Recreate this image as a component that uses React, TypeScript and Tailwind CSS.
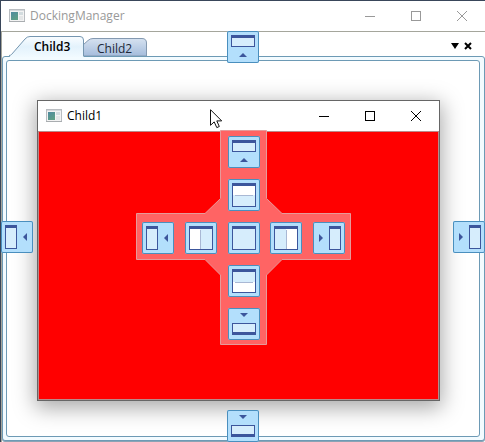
import type { ReactNode } from "react";

type Side = "top" | "bottom" | "left" | "right";
type GlyphKind = Side | "splitTop" | "splitBottom" | "splitLeft" | "splitRight" | "fill";

const NAVY = "#3c569c";
const PANE = "#d6edfc";

function Glyph({ kind }: { kind: GlyphKind }) {
  const pane = (x: number, y: number, w: number, h: number, barAtBottom = false) => (
    <>
      <rect x={x + 0.5} y={y + 0.5} width={w - 1} height={h - 1} fill={PANE} stroke={NAVY} />
      <rect x={x} y={barAtBottom ? y + h - 3 : y} width={w} height={3} fill={NAVY} />
    </>
  );
  return (
    <svg width="32" height="32" viewBox="0 0 32 32" className="block" aria-hidden="true">
      {kind === "top" && (
        <>
          {pane(4, 4, 24, 12)}
          <path d="M12 26 L16 22 L20 26 Z" fill={NAVY} />
        </>
      )}
      {kind === "bottom" && (
        <>
          {pane(4, 15, 24, 12, true)}
          <path d="M12 5 L20 5 L16 9 Z" fill={NAVY} />
        </>
      )}
      {kind === "left" && (
        <>
          {pane(4, 4, 12, 24)}
          <path d="M26 12 L26 20 L22 16 Z" fill={NAVY} />
        </>
      )}
      {kind === "right" && (
        <>
          {pane(16, 4, 12, 24)}
          <path d="M6 12 L6 20 L10 16 Z" fill={NAVY} />
        </>
      )}
      {!["top", "bottom", "left", "right"].includes(kind) && pane(4, 4, 24, 24)}
      {kind === "splitTop" && (
        <>
          <rect x="5" y="7" width="22" height="9" fill="#fff" />
          <path d="M7 16.5 H25" stroke="#a9b8d4" />
        </>
      )}
      {kind === "splitBottom" && (
        <>
          <rect x="5" y="17" width="22" height="10" fill="#fff" />
          <path d="M7 17.5 H25" stroke="#a9b8d4" />
        </>
      )}
      {kind === "splitLeft" && (
        <>
          <rect x="5" y="7" width="10" height="20" fill="#fff" />
          <path d="M15.5 8 V27" stroke="#a9b8d4" />
        </>
      )}
      {kind === "splitRight" && (
        <>
          <rect x="16" y="7" width="11" height="20" fill="#fff" />
          <path d="M16.5 8 V27" stroke="#a9b8d4" />
        </>
      )}
    </svg>
  );
}

function DockButton({ kind, label, className = "" }: { kind: GlyphKind; label: string; className?: string }) {
  return (
    <button
      type="button"
      aria-label={label}
      className={`flex size-8 items-center justify-center rounded-[2px] bg-[#b3dffc] shadow-[inset_0_0_0_1px_#4a8fbe] ${className}`}
    >
      <Glyph kind={kind} />
    </button>
  );
}

function AppIcon() {
  return (
    <svg width="16" height="14" viewBox="0 0 16 14" aria-hidden="true">
      <defs>
        <linearGradient id="appIconFill" x1="0" y1="0" x2="0.6" y2="1">
          <stop offset="0" stopColor="#4f8ba0" />
          <stop offset="1" stopColor="#5f9f86" />
        </linearGradient>
      </defs>
      <rect x="0.5" y="0.5" width="15" height="12" fill="#f3f3f3" stroke="#b9bdc1" />
      <rect x="1" y="1" width="14" height="1" fill="#d5d9dc" />
      <rect x="2" y="3" width="7" height="8" fill="url(#appIconFill)" />
      <rect x="10" y="3" width="4" height="3" fill="#d3dcdf" />
      <rect x="10" y="7" width="4" height="4" fill="#e4e6e7" />
      <rect x="0" y="12" width="16" height="1" fill="#a9adb0" />
    </svg>
  );
}

function CaptionButton({ label, children }: { label: string; children: ReactNode }) {
  return (
    <button type="button" aria-label={label} className="flex h-full w-[46px] items-center justify-center">
      <svg width="12" height="12" viewBox="0 0 12 12" fill="none" stroke="currentColor" aria-hidden="true">
        {children}
      </svg>
    </button>
  );
}

function TitleBar({ title, className }: { title: string; className: string }) {
  return (
    <header className={`flex h-[30px] shrink-0 items-center bg-white pl-2 ${className}`}>
      <AppIcon />
      <h1 className="ml-[5px] flex-1 text-[12px] leading-4">{title}</h1>
      <div className="flex h-full">
        <CaptionButton label="Minimize">
          <path d="M1 6.5 H11" />
        </CaptionButton>
        <CaptionButton label="Maximize">
          <rect x="1.5" y="1.5" width="9" height="9" />
        </CaptionButton>
        <CaptionButton label="Close">
          <path d="M1 1 L11 11 M11 1 L1 11" />
        </CaptionButton>
      </div>
    </header>
  );
}

function TabStrip() {
  return (
    <div className="flex h-6 items-end justify-between pl-[7px] pr-[13px]">
      <div role="tablist" className="flex items-end">
        <button
          type="button"
          role="tab"
          aria-selected="true"
          className="relative z-10 h-5 w-[75px] pt-0.5 pl-[25px] text-left text-[12px] leading-[18px] font-semibold text-black"
        >
          <svg width="75" height="21" viewBox="0 0 75 21" className="absolute top-0 left-0" aria-hidden="true">
            <defs>
              <linearGradient id="activeTab" x1="0" y1="0" x2="0" y2="1">
                <stop offset="0" stopColor="#fafdff" />
                <stop offset="0.5" stopColor="#e3f2fc" />
                <stop offset="1" stopColor="#f1faff" />
              </linearGradient>
            </defs>
            <path d="M0.5 21 L2 19 L16 3 Q18 0.5 21 0.5 H71 Q74.5 0.5 74.5 4 V21 Z" fill="url(#activeTab)" />
            <path
              d="M0 19.5 Q1.500 19.500 2.500 18.500 L16 3 Q18 0.5 21 0.5 H71 Q74.5 0.5 74.5 4 V20"
              fill="none"
              stroke="#7596b0"
            />
          </svg>
          <span className="relative">Child3</span>
        </button>
        <button
          type="button"
          role="tab"
          aria-selected="false"
          className="relative h-[18px] w-[63px] pt-0.5 pl-[13px] text-left text-[12px] leading-[18px] text-[#202838]"
        >
          <svg width="63" height="18" viewBox="0 0 63 18" className="absolute top-0 left-0" aria-hidden="true">
            <defs>
              <linearGradient id="idleTab" x1="0" y1="0" x2="0" y2="1">
                <stop offset="0" stopColor="#d6e2f0" />
                <stop offset="1" stopColor="#a4bcdc" />
              </linearGradient>
            </defs>
            <path
              d="M-1 7 L4 2.500 Q6 0.5 9 0.5 H58 Q62.500 0.5 62.500 5 V18 H-1 Z"
              fill="url(#idleTab)"
              stroke="#8499b0"
            />
          </svg>
          <span className="relative">Child2</span>
        </button>
      </div>
      <div className="flex h-5 items-center gap-[5px]">
        <button type="button" aria-label="Window list" className="flex h-4 items-center">
          <svg width="8" height="6" viewBox="0 0 8 6" aria-hidden="true">
            <path d="M0 0 H8 L4 6 Z" fill="#000" />
          </svg>
        </button>
        <button type="button" aria-label="Close tab" className="flex h-4 items-center">
          <svg width="8" height="8" viewBox="0 0 8 8" aria-hidden="true">
            <path d="M1 1 L7 7 M7 1 L1 7" stroke="#000" strokeWidth="2" />
          </svg>
        </button>
      </div>
    </div>
  );
}

function Compass() {
  return (
    <div className="relative size-[215px]">
      <svg width="215" height="215" viewBox="0 0 215 215" className="absolute inset-0" aria-hidden="true">
        <path
          d="M84.500 0.5 H130.500 V68.500 L146 83.500 H214.500 V129.500 H146 L130.500 145 V214.500 H84.500 V145 L69 129.500 H0.500 V83.500 H69 L84.500 68.500 Z"
          fill="#ff6464"
          stroke="#e69a9a"
        />
      </svg>
      <div className="relative grid grid-cols-5 grid-rows-5 gap-[11px] p-[6px]">
        <DockButton kind="top" label="Dock top" className="col-start-3 row-start-1" />
        <DockButton kind="splitTop" label="Split top" className="col-start-3 row-start-2" />
        <DockButton kind="left" label="Dock left" className="col-start-1 row-start-3" />
        <DockButton kind="splitLeft" label="Split left" className="col-start-2 row-start-3" />
        <DockButton kind="fill" label="Dock as tab" className="col-start-3 row-start-3" />
        <DockButton kind="splitRight" label="Split right" className="col-start-4 row-start-3" />
        <DockButton kind="right" label="Dock right" className="col-start-5 row-start-3" />
        <DockButton kind="splitBottom" label="Split bottom" className="col-start-3 row-start-4" />
        <DockButton kind="bottom" label="Dock bottom" className="col-start-3 row-start-5" />
      </div>
    </div>
  );
}

function Cursor() {
  return (
    <svg width="13" height="20" viewBox="0 0 13 20" className="absolute top-[108px] left-[209px]" aria-hidden="true">
      <path
        d="M0.500 0.700 V16.300 L4.200 12.900 L6.800 18.600 L9.300 17.500 L6.800 11.900 H11.700 Z"
        fill="#fff"
        stroke="#111"
      />
    </svg>
  );
}

export default function App() {
  return (
    <div className="relative flex h-screen flex-col overflow-hidden border-t border-l border-[#39465a] bg-white font-['Open_Sans','Noto_Sans',sans-serif]">
      <TitleBar title="DockingManager" className="text-[#999999]" />

      <main className="relative flex flex-1 flex-col border-t border-l border-[#a5a69c] bg-white">
        <TabStrip />
        <section
          aria-label="Child3"
          className="mb-px flex flex-1 rounded-[3px] border border-[#6d9ab5] bg-[#f3fbff] p-[3px] pr-1 shadow-[0_1px_0_#8ba3b4]"
        >
          <div className="flex-1 rounded-[3px] border border-[#6d9ab5] bg-white" />
        </section>
      </main>

      <article
        aria-label="Child1"
        className="absolute top-[99px] right-[45px] bottom-[41px] left-9 flex flex-col border border-[#666666] bg-white shadow-[0_5px_20px_2px_rgba(0,0,0,0.34)]"
      >
        <TitleBar title="Child1" className="text-black" />
        <div className="flex-1 border border-[#b98a8a] bg-[#ff0000]" />
      </article>

      <div className="absolute top-[30px] right-0 bottom-0 left-0">
        <div className="flex h-full items-center justify-center pt-0.5 pl-px">
          <Compass />
        </div>
        <div className="absolute inset-x-0 top-0 flex justify-center">
          <DockButton kind="top" label="Dock to top edge" />
        </div>
        <div className="absolute inset-x-0 bottom-0 flex justify-center">
          <DockButton kind="bottom" label="Dock to bottom edge" />
        </div>
        <div className="absolute inset-y-0 left-0 flex items-center">
          <DockButton kind="left" label="Dock to left edge" />
        </div>
        <div className="absolute inset-y-0 right-0 flex items-center">
          <DockButton kind="right" label="Dock to right edge" />
        </div>
      </div>

      <Cursor />
    </div>
  );
}
